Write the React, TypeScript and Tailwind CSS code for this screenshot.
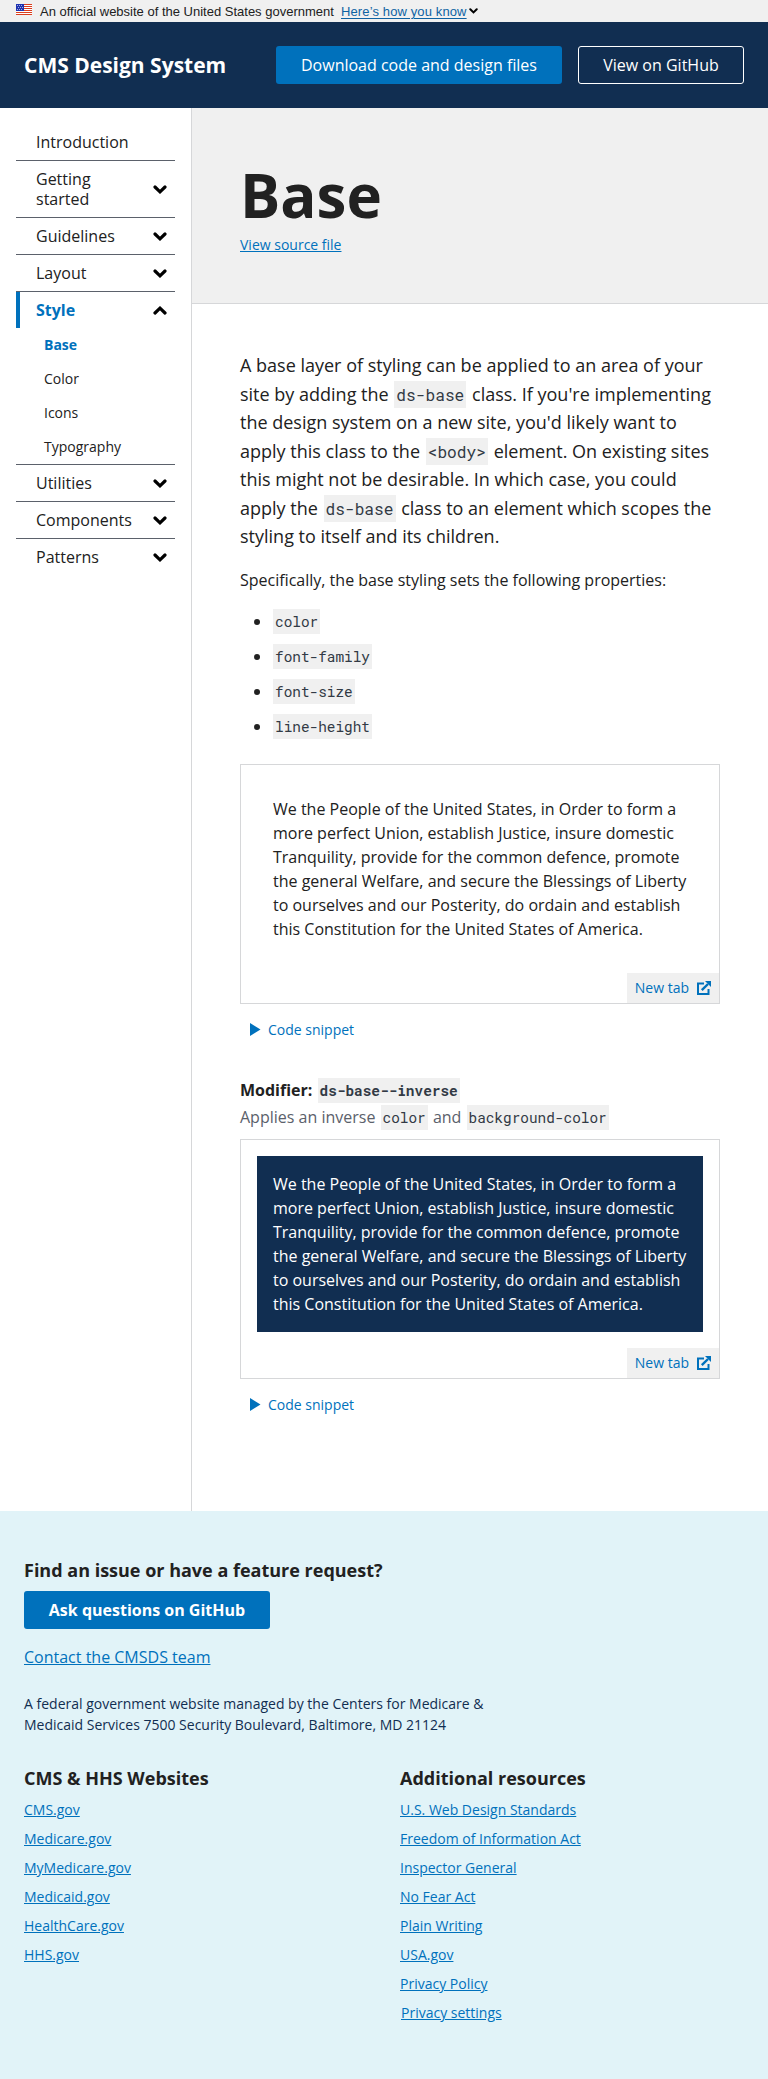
import React from "react";

const LINK = "text-[#0071bc] underline";

function Flag() {
  return (
    <svg width="16" height="11" viewBox="0 0 16 11" className="block" shapeRendering="crispEdges">
      <rect width="16" height="11" fill="#fff" />
      {[0, 2, 4, 6, 8, 10].map((y) => (
        <rect key={y} y={y} width="16" height="1" fill="#db3e1f" />
      ))}
      <rect width="8" height="7" fill="#1e33b1" />
      {[1, 3, 5].map((y) =>
        [1, 3, 5].map((x) => (
          <rect key={`${x}-${y}`} x={x + (y === 3 ? 1 : 0)} y={y} width="1" height="1" fill="#a5addf" />
        )),
      )}
    </svg>
  );
}

function Chevron({ up = false, size = 14 }: { up?: boolean; size?: number }) {
  return (
    <svg width={size} height={(size * 9) / 14} viewBox="0 0 14 9" fill="none" className="block shrink-0">
      <path d={up ? "M2 7L7 2.2L12 7" : "M2 2L7 6.8L12 2"} stroke="#000" strokeWidth="3.2" strokeLinecap="round" />
    </svg>
  );
}

function ExternalIcon() {
  return (
    <svg width="14" height="14" viewBox="0 0 14 14" className="block">
      <path d="M7 2.500H1V13H11.500V8" fill="none" stroke="#0071bc" strokeWidth="2" />
      <path d="M4.800 9.200L11 3" stroke="#0071bc" strokeWidth="2.4" fill="none" />
      <path d="M8 0H14V6Z" fill="#0071bc" />
    </svg>
  );
}

function Code({ children }: { children: React.ReactNode }) {
  return (
    <code className="mx-px bg-[#f0f0f0] px-[2px] py-[3px] font-['Roboto_Mono','DejaVu_Sans_Mono',monospace] text-[0.9em] leading-none text-[#323a45]">
      {children}
    </code>
  );
}

type NavItem = { label: string; plain?: boolean };
const NAV_TOP: NavItem[] = [
  { label: "Introduction", plain: true },
  { label: "Getting started" },
  { label: "Guidelines" },
  { label: "Layout" },
];
const NAV_BOTTOM: NavItem[] = [{ label: "Utilities" }, { label: "Components" }, { label: "Patterns" }];

function NavRow({ item, last = false }: { item: NavItem; last?: boolean }) {
  return (
    <li
      className={
        "flex items-center justify-between py-2 pl-5 pr-2 text-base leading-5 " +
        (last ? "" : "border-b border-[#5b616b]")
      }
    >
      <span className={item.plain ? "" : "w-[105px]"}>{item.label}</span>
      {!item.plain && <Chevron />}
    </li>
  );
}

function Sidebar() {
  return (
    <aside className="w-48 shrink-0 border-r border-[#d6d7d9] pl-4 pr-4 pt-4">
      <ul>
        {NAV_TOP.map((i) => (
          <NavRow key={i.label} item={i} />
        ))}
        <li className="border-b border-[#5b616b]">
          <div className="flex items-center justify-between border-l-4 border-[#0071bc] py-2 pl-4 pr-2 text-base font-bold leading-5 text-[#0071bc]">
            <span>Style</span>
            <Chevron up />
          </div>
          <ul className="pl-7 text-sm leading-[34px]">
            <li className="font-bold text-[#0071bc]">Base</li>
            <li>Color</li>
            <li>Icons</li>
            <li>Typography</li>
          </ul>
        </li>
        {NAV_BOTTOM.map((i, n) => (
          <NavRow key={i.label} item={i} last={n === NAV_BOTTOM.length - 1} />
        ))}
      </ul>
    </aside>
  );
}

function Example({ inverse = false }: { inverse?: boolean }) {
  return (
    <div>
      <div className="border border-[#d6d7d9]">
        <div className="p-4">
          <p className={"whitespace-nowrap p-4 text-base leading-6 " + (inverse ? "bg-[#112e51] text-white" : "")}>
            We the People of the United States, in Order to form a
            <br />
            more perfect Union, establish Justice, insure domestic
            <br />
            Tranquility, provide for the common defence, promote
            <br />
            the general Welfare, and secure the Blessings of Liberty
            <br />
            to ourselves and our Posterity, do ordain and establish
            <br />
            this Constitution for the United States of America.
          </p>
        </div>
        <div className="flex justify-end">
          <a className="flex h-[30px] items-center gap-2 bg-[#f0f0f0] px-2 text-sm text-[#0071bc]">
            New tab
            <ExternalIcon />
          </a>
        </div>
      </div>
      <div className="mt-4 flex h-[21px] items-center gap-[7px] pl-[10px] text-sm text-[#0071bc]">
        <svg width="11" height="13" viewBox="0 0 11 13" className="-mt-px block">
          <path d="M0 0L10.500 6.500L0 13Z" fill="#0071bc" />
        </svg>
        Code snippet
      </div>
    </div>
  );
}

const SITES = ["CMS.gov", "Medicare.gov", "MyMedicare.gov", "Medicaid.gov", "HealthCare.gov", "HHS.gov"];
const RESOURCES = [
  "U.S. Web Design Standards",
  "Freedom of Information Act",
  "Inspector General",
  "No Fear Act",
  "Plain Writing",
  "USA.gov",
  "Privacy Policy",
];

export default function App() {
  return (
    <div className="flex h-[2079px] w-full flex-col bg-white font-['Open_Sans',sans-serif] text-base text-[#212121]">
      <div className="flex h-[22px] items-center bg-[#f0f0f0] pl-4 font-['Liberation_Sans',sans-serif] text-[13px] leading-none">
        <div className="-mt-[3px]">
          <Flag />
        </div>
        <span className="ml-2 w-[293px] whitespace-nowrap">An official website of the United States government</span>
        <a className="ml-2 w-[126px] whitespace-nowrap text-[#0e63a3] underline decoration-1 underline-offset-2 tracking-[0.120px]">
          Here’s how you know
        </a>
        <span className="ml-[2px]">
          <Chevron size={9} />
        </span>
      </div>

      <header className="flex h-[86px] items-center bg-[#112e51] px-6 text-white">
        <h1 className="pt-0.5 text-[21px] font-bold">CMS Design System</h1>
        <a className="ml-auto flex h-[38px] w-[286px] items-center justify-center rounded-[3px] bg-[#0071bc]">
          Download code and design files
        </a>
        <a className="ml-4 flex h-[38px] w-[166px] items-center justify-center rounded-[3px] border border-white">
          View on GitHub
        </a>
      </header>

      <div className="flex h-[1403px]">
        <Sidebar />
        <main className="flex-1">
          <div className="h-[196px] border-b border-[#d6d7d9] bg-[#f0f0f0] pl-12 pt-12">
            <h2 className="text-[60px] font-bold leading-[78px]">Base</h2>
            <a className={"block text-sm leading-[21px] " + LINK}>View source file</a>
          </div>
          <div className="px-12 pt-[47px]">
            <p className="text-lg leading-[28.500px]">
              A base layer of styling can be applied to an area of your
              <br />
              site by adding the <Code>ds-base</Code> class. If you're implementing
              <br />
              the design system on a new site, you'd likely want to
              <br />
              apply this class to the <Code>{"<body>"}</Code> element. On existing sites
              <br />
              this might not be desirable. In which case, you could
              <br />
              apply the <Code>ds-base</Code> class to an element which scopes the
              <br />
              styling to itself and its children.
            </p>
            <p className="mt-[17px] leading-6">Specifically, the base styling sets the following properties:</p>
            <ul className="mt-3 list-disc pl-8 leading-[35px]">
              <li><Code>color</Code></li>
              <li><Code>font-family</Code></li>
              <li><Code>font-size</Code></li>
              <li><Code>line-height</Code></li>
            </ul>
            <div className="mt-5">
              <Example />
            </div>
            <h3 className="mt-9 font-bold leading-[27px]">
              Modifier: <Code>ds-base--inverse</Code>
            </h3>
            <p className="leading-[27px] text-[#5b616b]">
              Applies an inverse <Code>color</Code> and <Code>background-color</Code>
            </p>
            <div className="mt-2">
              <Example inverse />
            </div>
          </div>
        </main>
      </div>

      <footer className="flex-1 bg-[#e1f3f8] px-6 pt-12">
        <h3 className="text-lg font-bold leading-[23px]">Find an issue or have a feature request?</h3>
        <a className="mt-[9px] flex h-[38px] w-[246px] items-center justify-center rounded-[3px] bg-[#0071bc] font-bold text-white">
          Ask questions on GitHub
        </a>
        <a className={"mt-4 block leading-6 " + LINK}>Contact the CMSDS team</a>
        <p className="mt-6 text-sm leading-[21px] text-[#112e51]">
          A federal government website managed by the Centers for Medicare &amp;
          <br />
          Medicaid Services 7500 Security Boulevard, Baltimore, MD 21124
        </p>
        <div className="mt-8 grid grid-cols-2 gap-8">
          <div>
            <h3 className="text-lg font-bold leading-[23px]">CMS &amp; HHS Websites</h3>
            <ul className="mt-[5px] text-sm leading-[29px]">
              {SITES.map((s) => (
                <li key={s}><a className={LINK}>{s}</a></li>
              ))}
            </ul>
          </div>
          <div>
            <h3 className="text-lg font-bold leading-[23px]">Additional resources</h3>
            <ul className="mt-[5px] text-sm leading-[29px]">
              {RESOURCES.map((s) => (
                <li key={s}><a className={LINK}>{s}</a></li>
              ))}
              <li className="pl-px"><a className={LINK}>Privacy settings</a></li>
            </ul>
          </div>
        </div>
      </footer>
    </div>
  );
}
